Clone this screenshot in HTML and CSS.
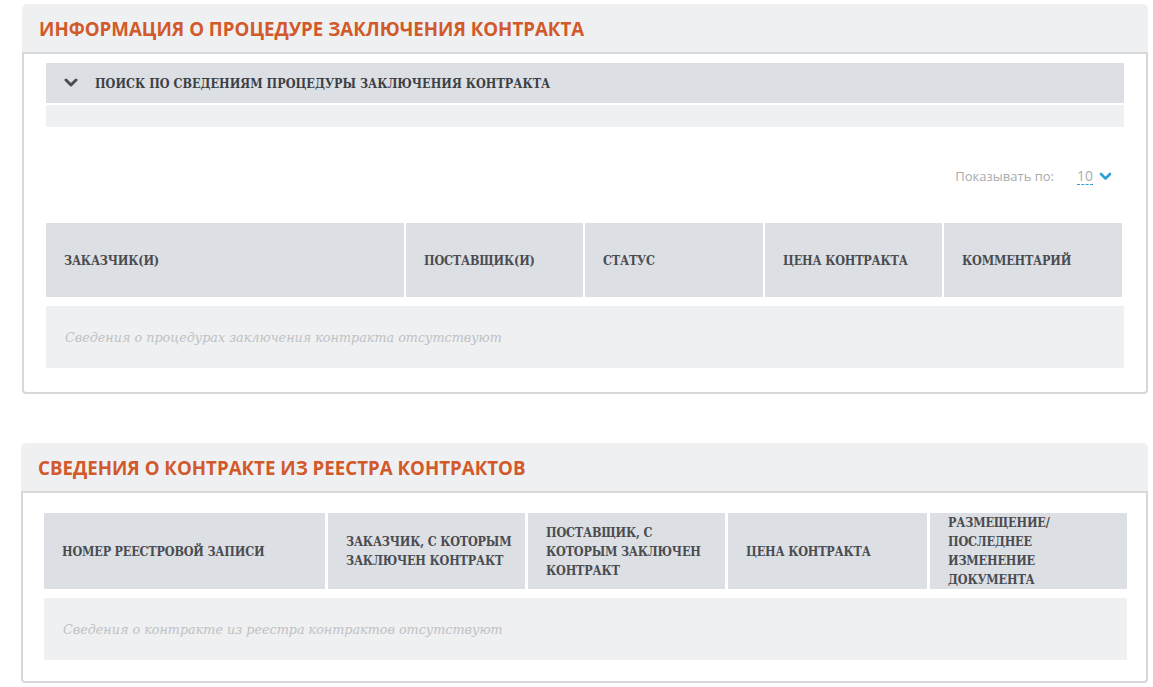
FILE: index.html
```html
<!DOCTYPE html>
<html lang="ru">
<head>
<meta charset="utf-8">
<title>Информация о процедуре заключения контракта</title>
<link rel="stylesheet" href="styles.css">
</head>
<body>
<section class="panel panel-first">
  <header class="panel-head"><h2 class="panel-title">ИНФОРМАЦИЯ О ПРОЦЕДУРЕ ЗАКЛЮЧЕНИЯ КОНТРАКТА</h2></header>
  <div class="panel-body body-first">
    <div class="search-bar">
      <svg class="chev" width="14" height="10" viewBox="0 0 14 10"><polyline points="2,2 7,7 12,2" fill="none" stroke="#4b4f55" stroke-width="3" stroke-linecap="round" stroke-linejoin="round"/></svg>
      <span class="search-title">ПОИСК ПО СВЕДЕНИЯМ ПРОЦЕДУРЫ ЗАКЛЮЧЕНИЯ КОНТРАКТА</span>
    </div>
    <div class="search-strip"></div>
    <div class="pager">
      <span class="pager-label">Показывать по:</span>
      <span class="pager-value">10</span>
      <svg class="pager-chev" width="13" height="9" viewBox="0 0 13 9"><polyline points="2,2 6.5,6.5 11,2" fill="none" stroke="#2d9fd9" stroke-width="2.6" stroke-linecap="round" stroke-linejoin="round"/></svg>
    </div>
    <div class="grid grid-first">
      <div class="th">ЗАКАЗЧИК(И)</div>
      <div class="th">ПОСТАВЩИК(И)</div>
      <div class="th">СТАТУС</div>
      <div class="th">ЦЕНА КОНТРАКТА</div>
      <div class="th">КОММЕНТАРИЙ</div>
    </div>
    <div class="empty">Сведения о процедурах заключения контракта отсутствуют</div>
  </div>
</section>

<section class="panel panel-second">
  <header class="panel-head"><h2 class="panel-title">СВЕДЕНИЯ О КОНТРАКТЕ ИЗ РЕЕСТРА КОНТРАКТОВ</h2></header>
  <div class="panel-body body-second">
    <div class="grid grid-second">
      <div class="th">НОМЕР РЕЕСТРОВОЙ ЗАПИСИ</div>
      <div class="th">ЗАКАЗЧИК, С КОТОРЫМ ЗАКЛЮЧЕН КОНТРАКТ</div>
      <div class="th">ПОСТАВЩИК, С КОТОРЫМ ЗАКЛЮЧЕН КОНТРАКТ</div>
      <div class="th">ЦЕНА КОНТРАКТА</div>
      <div class="th">РАЗМЕЩЕНИЕ/ ПОСЛЕДНЕЕ ИЗМЕНЕНИЕ ДОКУМЕНТА</div>
    </div>
    <div class="empty">Сведения о контракте из реестра контрактов отсутствуют</div>
  </div>
</section>
</body>
</html>
```
FILE: styles.css
```css
html, body {
  margin: 0;
  background: #ffffff;
}
body {
  padding: 4px 5px 0 22px;
  font-family: "Open Sans", "Liberation Sans", sans-serif;
}
.panel {
  width: 1126px;
}
.panel-second {
  margin-top: 49px;
  margin-left: -1px;
  width: 1127px;
}
.panel-head {
  background: #eff0f1;
  border-radius: 5px 5px 0 0;
  height: 47px;
  padding-top: 1px;
  border-bottom: 2px solid #d6d8da;
  display: flex;
  align-items: center;
  padding-left: 17px;
}
.panel-title {
  margin: 0;
  font-size: 18.7px;
  font-weight: 700;
  color: #d2592a;
}
.panel-body {
  border: 2px solid #d8d8d8;
  border-top: 0;
  border-radius: 0 0 4px 4px;
}
.body-first {
  padding: 9px 22px 24px 22px;
}
.body-second {
  padding: 20px 19px 21px 21px;
}
.search-bar {
  height: 40px;
  background: #dcdfe4;
  display: flex;
  align-items: center;
  padding-left: 18px;
}
.chev {
  margin-right: 17px;
}
.search-title, .th {
  font-family: "DejaVu Serif Condensed", "DejaVu Serif", serif;
}
.empty {
  font-family: "DejaVu Serif", serif;
}
.search-title {
  font-size: 12.5px;
  font-weight: 700;
  color: #3c3f44;
}
.search-strip {
  height: 22px;
  margin-top: 2px;
  background: #eef0f2;
}
.pager {
  display: flex;
  justify-content: flex-end;
  align-items: center;
  height: 24px;
  margin: 37px 0 35px;
  padding-right: 12px;
}
.pager-label {
  font-size: 13px;
  color: #a9abad;
  margin-right: 23px;
}
.pager-value {
  font-size: 14px;
  color: #a9abad;
  border-bottom: 1px dashed #2d9fd9;
  line-height: 16px;
  margin-right: 6px;
}
.grid {
  display: grid;
}
.grid-first {
  grid-template-columns: 358px 177px 178px 177px 178px;
  column-gap: 2px;
  height: 74px;
}
.grid-second {
  grid-template-columns: 281px 197px 197px 199px 197px;
  column-gap: 3px;
  height: 75px;
}
.th {
  background: #dcdfe4;
  display: flex;
  align-items: center;
  padding-left: 18px;
  padding-right: 10px;
  font-size: 12.5px;
  font-weight: 700;
  color: #4a4c50;
  line-height: 19px;
  letter-spacing: -0.2px;
}
.empty {
  margin-top: 9px;
  height: 62px;
  background: #eef0f2;
  display: flex;
  align-items: center;
  padding-left: 19px;
  font-size: 12.75px;
  font-style: italic;
  color: #bfc1c3;
}
.body-second .empty {
  margin-top: 10px;
}
```
